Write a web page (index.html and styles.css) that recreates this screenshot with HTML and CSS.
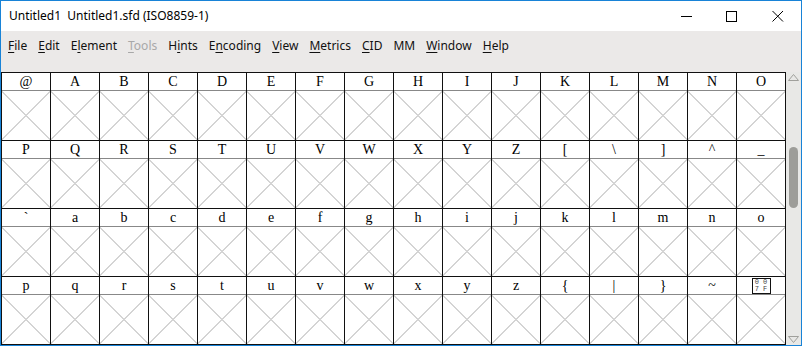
FILE: index.html
```html
<html>
<head>
    <title>Untitled1</title>
    <link rel="stylesheet" href="styles.css">
</head>
<body>
<div class="window">
    <div class="titlebar">
        <span class="title">Untitled1&nbsp; Untitled1.sfd (ISO8859-1)</span>
        <div class="controls">
            <svg class="ctl" width="46" height="30" viewBox="0 0 46 30"><path d="M18 15.5h11" stroke="#000" stroke-width="1"/></svg>
            <svg class="ctl" width="46" height="30" viewBox="0 0 46 30"><rect x="17.5" y="10.5" width="10" height="10" fill="none" stroke="#000" stroke-width="1"/></svg>
            <svg class="ctl" width="46" height="30" viewBox="0 0 46 30"><path d="M17.5 10l10.5 10.5M28 10L17.5 20.5" stroke="#000" stroke-width="1"/></svg>
        </div>
    </div>
    <div class="menubar">
        <span><u>F</u>ile</span>
        <span><u>E</u>dit</span>
        <span>E<u>l</u>ement</span>
        <span class="disabled"><u>T</u>ools</span>
        <span>H<u>i</u>nts</span>
        <span>E<u>n</u>coding</span>
        <span><u>V</u>iew</span>
        <span><u>M</u>etrics</span>
        <span><u>C</u>ID</span>
        <span>MM</span>
        <span><u>W</u>indow</span>
        <span><u>H</u>elp</span>
    </div>
    <div class="main">
        <div class="glyphs">
            <div class="cell"><div class="label">@</div><div class="glyph"></div></div>
            <div class="cell"><div class="label">A</div><div class="glyph"></div></div>
            <div class="cell"><div class="label">B</div><div class="glyph"></div></div>
            <div class="cell"><div class="label">C</div><div class="glyph"></div></div>
            <div class="cell"><div class="label">D</div><div class="glyph"></div></div>
            <div class="cell"><div class="label">E</div><div class="glyph"></div></div>
            <div class="cell"><div class="label">F</div><div class="glyph"></div></div>
            <div class="cell"><div class="label">G</div><div class="glyph"></div></div>
            <div class="cell"><div class="label">H</div><div class="glyph"></div></div>
            <div class="cell"><div class="label">I</div><div class="glyph"></div></div>
            <div class="cell"><div class="label">J</div><div class="glyph"></div></div>
            <div class="cell"><div class="label">K</div><div class="glyph"></div></div>
            <div class="cell"><div class="label">L</div><div class="glyph"></div></div>
            <div class="cell"><div class="label">M</div><div class="glyph"></div></div>
            <div class="cell"><div class="label">N</div><div class="glyph"></div></div>
            <div class="cell"><div class="label">O</div><div class="glyph"></div></div>

            <div class="cell"><div class="label">P</div><div class="glyph"></div></div>
            <div class="cell"><div class="label">Q</div><div class="glyph"></div></div>
            <div class="cell"><div class="label">R</div><div class="glyph"></div></div>
            <div class="cell"><div class="label">S</div><div class="glyph"></div></div>
            <div class="cell"><div class="label">T</div><div class="glyph"></div></div>
            <div class="cell"><div class="label">U</div><div class="glyph"></div></div>
            <div class="cell"><div class="label">V</div><div class="glyph"></div></div>
            <div class="cell"><div class="label">W</div><div class="glyph"></div></div>
            <div class="cell"><div class="label">X</div><div class="glyph"></div></div>
            <div class="cell"><div class="label">Y</div><div class="glyph"></div></div>
            <div class="cell"><div class="label">Z</div><div class="glyph"></div></div>
            <div class="cell"><div class="label">[</div><div class="glyph"></div></div>
            <div class="cell"><div class="label">\</div><div class="glyph"></div></div>
            <div class="cell"><div class="label">]</div><div class="glyph"></div></div>
            <div class="cell"><div class="label">^</div><div class="glyph"></div></div>
            <div class="cell"><div class="label">_</div><div class="glyph"></div></div>

            <div class="cell"><div class="label">`</div><div class="glyph"></div></div>
            <div class="cell"><div class="label">a</div><div class="glyph"></div></div>
            <div class="cell"><div class="label">b</div><div class="glyph"></div></div>
            <div class="cell"><div class="label">c</div><div class="glyph"></div></div>
            <div class="cell"><div class="label">d</div><div class="glyph"></div></div>
            <div class="cell"><div class="label">e</div><div class="glyph"></div></div>
            <div class="cell"><div class="label">f</div><div class="glyph"></div></div>
            <div class="cell"><div class="label">g</div><div class="glyph"></div></div>
            <div class="cell"><div class="label">h</div><div class="glyph"></div></div>
            <div class="cell"><div class="label">i</div><div class="glyph"></div></div>
            <div class="cell"><div class="label">j</div><div class="glyph"></div></div>
            <div class="cell"><div class="label">k</div><div class="glyph"></div></div>
            <div class="cell"><div class="label">l</div><div class="glyph"></div></div>
            <div class="cell"><div class="label">m</div><div class="glyph"></div></div>
            <div class="cell"><div class="label">n</div><div class="glyph"></div></div>
            <div class="cell"><div class="label">o</div><div class="glyph"></div></div>

            <div class="cell"><div class="label">p</div><div class="glyph"></div></div>
            <div class="cell"><div class="label">q</div><div class="glyph"></div></div>
            <div class="cell"><div class="label">r</div><div class="glyph"></div></div>
            <div class="cell"><div class="label">s</div><div class="glyph"></div></div>
            <div class="cell"><div class="label">t</div><div class="glyph"></div></div>
            <div class="cell"><div class="label">u</div><div class="glyph"></div></div>
            <div class="cell"><div class="label">v</div><div class="glyph"></div></div>
            <div class="cell"><div class="label">w</div><div class="glyph"></div></div>
            <div class="cell"><div class="label">x</div><div class="glyph"></div></div>
            <div class="cell"><div class="label">y</div><div class="glyph"></div></div>
            <div class="cell"><div class="label">z</div><div class="glyph"></div></div>
            <div class="cell"><div class="label">{</div><div class="glyph"></div></div>
            <div class="cell"><div class="label">|</div><div class="glyph"></div></div>
            <div class="cell"><div class="label">}</div><div class="glyph"></div></div>
            <div class="cell"><div class="label">~</div><div class="glyph"></div></div>
            <div class="cell"><div class="label"><span class="hexbox"><span>0 0</span><span>7 F</span></span></div><div class="glyph"></div></div>
        </div>
        <div class="scrollbar">
            <svg width="15" height="12" viewBox="0 0 15 12"><path d="M2.5 8.5h10l-5-6z" fill="none" stroke="#a0a09c" stroke-width="1"/></svg>
            <div class="track"><div class="thumb"></div></div>
            <svg width="15" height="12" viewBox="0 0 15 12"><path d="M2.5 3.5h10l-5 6z" fill="none" stroke="#a0a09c" stroke-width="1"/></svg>
        </div>
    </div>
</div>
</body>
</html>
```
FILE: styles.css
```css
* { margin: 0; padding: 0; box-sizing: border-box; }
body { background: #fff; font-family: "Noto Sans", sans-serif; }

.window { width: 802px; height: 346px; border: 1px solid #1883d7; display: flex; flex-direction: column; background: #fff; }

.titlebar { height: 30px; display: flex; align-items: center; justify-content: space-between; background: #fff; }
.title { padding-left: 8px; font-size: 12px; color: #000; padding-bottom: 1px; }
.controls { display: flex; }
.ctl { display: block; }

.menubar { height: 41px; background: #ebe9e8; display: flex; gap: 11px; padding: 6px 0 0 7px; font-size: 12px; color: #111; }
.menubar u { text-decoration-thickness: 1px; text-underline-offset: 2px; }
.menubar .disabled { color: #a8a8a8; }

.main { display: flex; height: 273px; }
.glyphs { width: 785px; display: grid; grid-template-columns: repeat(16, 49px); border-left: 1px solid #111; border-top: 1px solid #111; align-content: start; }
.cell { border-right: 1px solid #111; border-bottom: 1px solid #111; height: 68px; }
.label { height: 18px; border-bottom: 1px solid #888; font-family: "Liberation Serif", serif; font-size: 14px; line-height: 18px; text-align: center; color: #000; }
.glyph { height: 49px;
    background:
        linear-gradient(to top right, transparent calc(50% - 0.7px), #d4d4d4 calc(50% - 0.7px), #d4d4d4 calc(50% + 0.7px), transparent calc(50% + 0.7px)),
        linear-gradient(to bottom right, transparent calc(50% - 0.7px), #d4d4d4 calc(50% - 0.7px), #d4d4d4 calc(50% + 0.7px), transparent calc(50% + 0.7px));
}

.hexbox { display: inline-flex; flex-direction: column; vertical-align: top; margin-top: 1px; width: 19px; height: 16px; border: 1px solid #111; font-family: "Liberation Mono", monospace; font-size: 7px; line-height: 7px; color: #444; justify-content: center; align-items: center; white-space: pre; }

.scrollbar { width: 15px; background: #e8e8e6; display: flex; flex-direction: column; }
.scrollbar svg { display: block; }
.track { flex: 1; padding: 63px 2px 0 3px; }
.thumb { width: 9px; height: 61px; border-radius: 5px; background: #9d9d99; }
```
